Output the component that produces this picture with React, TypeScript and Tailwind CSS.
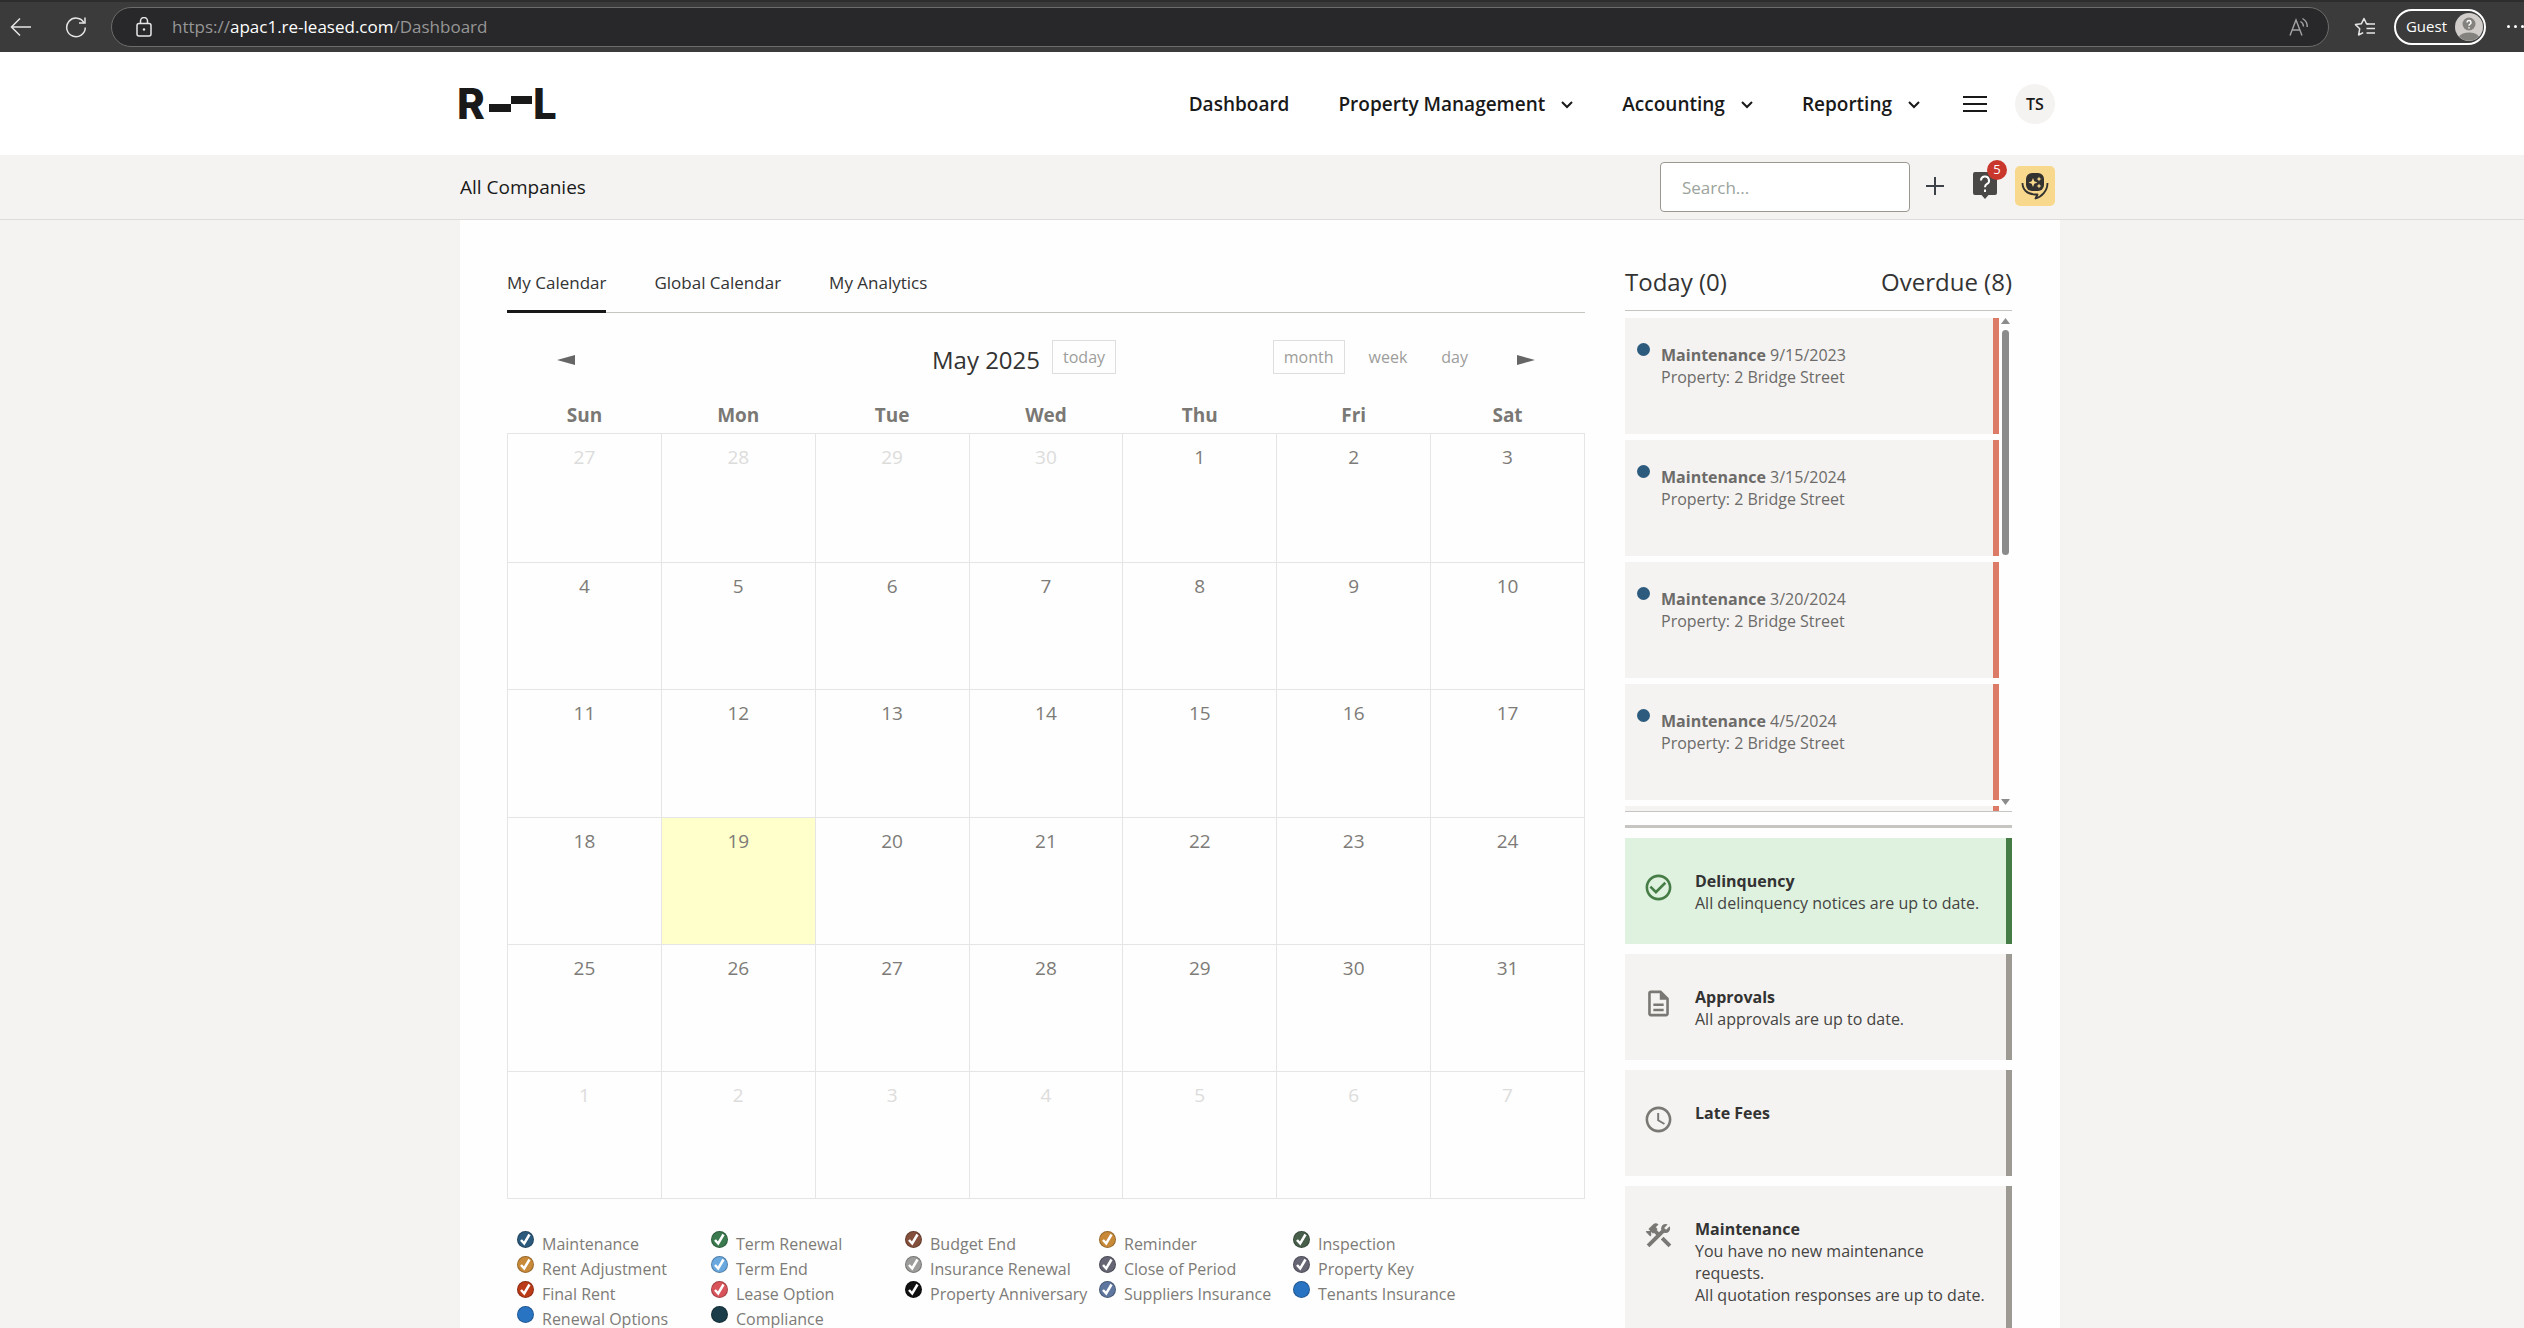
import React, { useState } from "react";
import {
  MdAccessTime,
  MdCheckCircleOutline,
  MdConstruction,
  MdOutlineDescription,
} from "react-icons/md";

const navItems = [
  { label: "Dashboard", hasMenu: false },
  { label: "Property Management", hasMenu: true },
  { label: "Accounting", hasMenu: true },
  { label: "Reporting", hasMenu: true },
];

const tabs = ["My Calendar", "Global Calendar", "My Analytics"];

const weekdays = ["Sun", "Mon", "Tue", "Wed", "Thu", "Fri", "Sat"];

const weeks = [
  [27, 28, 29, 30, 1, 2, 3],
  [4, 5, 6, 7, 8, 9, 10],
  [11, 12, 13, 14, 15, 16, 17],
  [18, 19, 20, 21, 22, 23, 24],
  [25, 26, 27, 28, 29, 30, 31],
  [1, 2, 3, 4, 5, 6, 7],
];

interface LegendItem {
  label: string;
  color: string;
  checked: boolean;
}

const legend: LegendItem[][] = [
  [
    { label: "Maintenance", color: "bg-[#2b5a7d]", checked: true },
    { label: "Rent Adjustment", color: "bg-[#c88a38]", checked: true },
    { label: "Final Rent", color: "bg-[#bb3a17]", checked: true },
    { label: "Renewal Options", color: "bg-[#2874c2]", checked: false },
  ],
  [
    { label: "Term Renewal", color: "bg-[#3b7a4f]", checked: true },
    { label: "Term End", color: "bg-[#6aa9e0]", checked: true },
    { label: "Lease Option", color: "bg-[#d9545a]", checked: true },
    { label: "Compliance", color: "bg-[#1a3d49]", checked: false },
  ],
  [
    { label: "Budget End", color: "bg-[#85503b]", checked: true },
    { label: "Insurance Renewal", color: "bg-[#9d9d9b]", checked: true },
    { label: "Property Anniversary", color: "bg-[#111111]", checked: true },
  ],
  [
    { label: "Reminder", color: "bg-[#c88a38]", checked: true },
    { label: "Close of Period", color: "bg-[#666574]", checked: true },
    { label: "Suppliers Insurance", color: "bg-[#5f779e]", checked: true },
  ],
  [
    { label: "Inspection", color: "bg-[#48604b]", checked: true },
    { label: "Property Key", color: "bg-[#666574]", checked: true },
    { label: "Tenants Insurance", color: "bg-[#2874c2]", checked: false },
  ],
];

const overdue = ["9/15/2023", "3/15/2024", "3/20/2024", "4/5/2024"];

const notices = [
  {
    title: "Delinquency",
    lines: ["All delinquency notices are up to date."],
    icon: MdCheckCircleOutline,
    card: "bg-[#dff2df] border-[#467c46]",
    iconColor: "text-[#467c46]",
  },
  {
    title: "Approvals",
    lines: ["All approvals are up to date."],
    icon: MdOutlineDescription,
    card: "bg-[#f4f3f1] border-[#9d9a94]",
    iconColor: "text-[#7a7874]",
  },
  {
    title: "Late Fees",
    lines: [],
    icon: MdAccessTime,
    card: "bg-[#f4f3f1] border-[#9d9a94]",
    iconColor: "text-[#7a7874]",
  },
  {
    title: "Maintenance",
    lines: [
      "You have no new maintenance requests.",
      "All quotation responses are up to date.",
    ],
    icon: MdConstruction,
    card: "bg-[#f4f3f1] border-[#9d9a94]",
    iconColor: "text-[#7a7874]",
  },
];

const BrowserBar: React.FC = () => (
  <div className="flex h-[52px] shrink-0 items-center border-t-2 border-[#2d2d2d] bg-[#3b3b3b] pb-px text-[#e6e6e6]">
    <button aria-label="Back" className="ml-[10px]">
      <svg width="22" height="22" viewBox="0 0 22 22" fill="none" stroke="currentColor" strokeWidth="1.5">
        <path d="M21 11H1.5M10 2.5L1.5 11l8.5 8.5" />
      </svg>
    </button>
    <button aria-label="Refresh" className="ml-[33px]">
      <svg width="22" height="22" viewBox="0 0 22 22" fill="none" stroke="currentColor" strokeWidth="1.5">
        <path d="M19.2 7A9.3 9.3 0 1 0 20.3 11.5" />
        <path d="M20 1.5V7h-6" />
      </svg>
    </button>
    <div className="ml-6 flex h-10 flex-1 items-center rounded-full border border-[#6c6c6a] bg-[#28282a] pr-[18px] pl-6">
      <svg width="16" height="20" viewBox="0 0 16 20" fill="none" stroke="currentColor" strokeWidth="1.5">
        <rect x="1" y="6.5" width="14" height="12.5" rx="2" />
        <path d="M4.5 6.5V4a3.5 3.5 0 0 1 7 0v2.5" />
        <circle cx="8" cy="12.5" r="1.2" fill="currentColor" stroke="none" />
      </svg>
      <span className="ml-5 flex-1 text-[17px] text-[#969696]">
        https://<span className="text-white">apac1.re-leased.com</span>/Dashboard
      </span>
      <button aria-label="Read aloud" className="text-[#a3a3a3]">
        <svg width="22" height="20" viewBox="0 0 22 20" fill="none" stroke="currentColor" strokeWidth="1.4">
          <path d="M2 18.5L8 3l6 15.5M4.2 13h7.6" />
          <path d="M12.5 4.5a6 6 0 0 1 3 5M14.5 1.5a9.5 9.5 0 0 1 4.8 8.5" />
        </svg>
      </button>
    </div>
    <button aria-label="Favorites" className="ml-[25px]">
      <svg width="22" height="20" viewBox="0 0 22 20" fill="none" stroke="currentColor" strokeWidth="1.5">
        <path d="M14.5 7L12.500 6.8 10 1.5 7.3 6.8 1.5 7.6l4.2 4.2L4.6 18l4.6-2.4" strokeLinejoin="round" />
        <path d="M12.5 7H21M12.5 11.5H21M12.5 16H21" />
      </svg>
    </button>
    <button className="ml-[18px] flex h-9 items-center gap-2 rounded-full border-2 border-white pr-px pl-[10px] text-[15px] text-white">
      Guest
      <svg width="28" height="28" viewBox="0 0 28 28">
        <circle cx="14" cy="14" r="14" fill="#d0cdcb" />
        <path d="M4 23.5a11 7 0 0 1 20 0A14 14 0 0 1 4 23.5z" fill="#84827f" />
        <circle cx="14" cy="11" r="6.5" fill="#84827f" />
        <path d="M12 9.5a2 2 0 1 1 2.8 1.9q-.8.4-.8 1.4M14 14.2v1.3" fill="none" stroke="#fff" strokeWidth="1.5" />
      </svg>
    </button>
    <button aria-label="Settings and more" className="ml-[21px] flex w-[17px] items-center gap-1 overflow-hidden">
      <span className="size-[3px] shrink-0 rounded-full bg-white" />
      <span className="size-[3px] shrink-0 rounded-full bg-white" />
      <span className="size-[3px] shrink-0 rounded-full bg-white" />
    </button>
  </div>
);

const Logo: React.FC = () => (
  <svg
    className="-ml-1"
    width="110"
    height="60"
    viewBox="-4 -15 110 60"
    fill="#191919"
    role="img"
    aria-label="R--L"
  >
    <text x="-3" y="30" fontFamily="Inter, sans-serif" fontWeight="800" fontSize="42">
      R
    </text>
    <rect x="29" y="15" width="22" height="8" />
    <rect x="51" y="7" width="21" height="8" />
    <text x="73" y="30" fontFamily="Inter, sans-serif" fontWeight="800" fontSize="42">
      L
    </text>
  </svg>
);

const Header: React.FC = () => (
  <header className="shrink-0 bg-white pr-1">
    <div className="mx-auto flex h-[103px] max-w-[1600px] items-center justify-between pr-[5px]">
      <a href="#" aria-label="Home">
        <Logo />
      </a>
      <div className="flex items-center">
        <nav className="flex items-center gap-[49px] pt-0.5 text-[19px] font-semibold text-[#191919]">
          {navItems.map((item) => (
            <a key={item.label} href="#" className="flex items-center gap-4">
              {item.label}
              {item.hasMenu && (
                <svg width="12" height="8" viewBox="0 0 12 8" fill="none" stroke="currentColor" strokeWidth="2">
                  <path d="M1 1l5 5 5-5" />
                </svg>
              )}
            </a>
          ))}
        </nav>
        <button aria-label="Menu" className="ml-[43px] flex w-6 flex-col gap-[5px]">
          <span className="h-0.5 bg-[#191919]" />
          <span className="h-0.5 bg-[#191919]" />
          <span className="h-0.5 bg-[#191919]" />
        </button>
        <button className="ml-7 size-10 rounded-full bg-[#f4f3f1] text-base font-semibold text-[#191919]">
          TS
        </button>
      </div>
    </div>
  </header>
);

const CompanyBar: React.FC = () => (
  <div className="shrink-0 border-b border-[#dddcda] pr-1">
    <div className="mx-auto flex h-16 max-w-[1600px] items-center pr-[5px]">
      <span className="flex-1 text-[19px] text-[#191919]">All Companies</span>
      <input
        type="search"
        aria-label="Search"
        placeholder="Search..."
        className="h-[50px] w-[250px] rounded border border-[#9c9890] bg-white px-[21px] text-[17px] placeholder:text-[#9ba39c]"
      />
      <div className="flex items-center pb-[3px]">
        <button aria-label="Add" className="ml-4">
          <svg width="18" height="18" viewBox="0 0 18 18" stroke="#3d4248" strokeWidth="2">
            <path d="M9 0v18M0 9h18" />
          </svg>
        </button>
        <button aria-label="Help" className="relative ml-[29px]">
          <svg width="24" height="27" viewBox="0 0 24 27" fill="none">
            <path d="M2 0h20a2 2 0 0 1 2 2v19a2 2 0 0 1-2 2h-6.5L12 27l-3.5-4H2a2 2 0 0 1-2-2V2a2 2 0 0 1 2-2z" fill="#4a4846" />
            <path d="M8 8.5a4 4 0 1 1 6 3.400q-2 1.2-2 3.3M12 17.5v2.5" stroke="#fff" strokeWidth="2" />
          </svg>
          <span className="absolute -top-3 left-[14px] flex size-5 items-center justify-center rounded-full bg-[#c9362c] text-[13px] text-white">
            5
          </span>
        </button>
        <button aria-label="Assistant" className="ml-[18px] flex size-10 items-center justify-center rounded-[5px] bg-[#f7d88c]">
          <svg width="28" height="28" viewBox="0 0 28 28" fill="none">
            <rect x="5" y="1" width="18" height="18" rx="6" fill="#333231" />
            <path d="M12 6l1.3 3.200L16.5 10.500l-3.200 1.300L12 15l-1.300-3.200L7.500 10.500l3.200-1.300zM18 4.500l.8 1.700 1.700.8-1.700.8-.8 1.700-.8-1.700-1.700-.8 1.700-.8zM18 11.500l.8 1.700 1.700.8-1.700.8-.8 1.700-.8-1.700-1.700-.8 1.700-.8z" fill="#f7d88c" />
            <path d="M1.500 11c0 6.500 4.500 11 12 11.500h3l-2 4c6-1.500 12-7.500 12-15.500" stroke="#333231" strokeWidth="1.8" strokeLinejoin="round" />
          </svg>
        </button>
      </div>
    </div>
  </div>
);

const Calendar: React.FC = () => {
  const [view, setView] = useState("month");

  return (
    <div>
      <div className="mt-[27px] flex h-[34px] items-center text-base text-[#9d9d9b]">
        <div className="flex flex-1 items-center pl-[50px]">
          <button aria-label="Previous month" className="mt-1.5">
            <svg width="18" height="10" viewBox="0 0 18 10" fill="#666">
              <path d="M0 5l18-5v10z" />
            </svg>
          </button>
        </div>
        <div className="flex items-center gap-3 pr-11">
          <h2 className="mt-1.5 text-2xl text-[#333]">May 2025</h2>
          <button className="h-[34px] border border-[#dedede] px-[10px]">today</button>
        </div>
        <div className="flex flex-1 items-center justify-end pr-[50px]">
          {["month", "week", "day"].map((v) => (
            <button
              key={v}
              onClick={() => setView(v)}
              className={
                view === v
                  ? "mr-[7px] h-[34px] border border-[#dedede] px-[10px]"
                  : "h-[34px] px-[17px]"
              }
            >
              {v}
            </button>
          ))}
          <button aria-label="Next month" className="mt-1.5 ml-8">
            <svg width="18" height="10" viewBox="0 0 18 10" fill="#666">
              <path d="M18 5L0 0v10z" />
            </svg>
          </button>
        </div>
      </div>

      <table className="mt-[22px] w-full table-fixed border-collapse">
        <thead>
          <tr className="h-[37px]">
            {weekdays.map((day) => (
              <th key={day} className="p-0 pt-0.5 text-[19px] leading-6 font-bold text-[#7a7874]">
                {day}
              </th>
            ))}
          </tr>
        </thead>
        <tbody>
          {weeks.map((week, row) => (
            <tr key={row} className="h-[127px] first:h-[129px] nth-3:h-[128px]">
              {week.map((date, col) => {
                const otherMonth = (row === 0 && date > 7) || row === 5;
                const isToday = row === 3 && date === 19;
                return (
                  <td
                    key={col}
                    className={`border border-[#e5e5e5] p-0 pt-[9px] text-center align-top text-[19px] leading-7 ${
                      otherMonth ? "text-[#dcdcdb]" : "text-[#7d7b77]"
                    } ${isToday ? "bg-[#ffffcc]" : ""}`}
                  >
                    {date}
                  </td>
                );
              })}
            </tr>
          ))}
        </tbody>
      </table>
    </div>
  );
};

const Legend: React.FC = () => (
  <div className="mt-8 grid w-[980px] grid-cols-5 pl-[10px]">
    {legend.map((column, i) => (
      <div key={i} className="flex flex-col">
        {column.map((item) => (
          <label
            key={item.label}
            className="flex h-[25px] items-start gap-2 text-base leading-[26px] whitespace-nowrap text-[#7d7b77]"
          >
            <span className="relative size-[17px] shrink-0">
              <input
                type="checkbox"
                defaultChecked={item.checked}
                className={`peer block size-[17px] appearance-none rounded-full border border-black/25 ${item.color}`}
              />
              <svg
                className="pointer-events-none absolute inset-0 hidden peer-checked:block"
                width="17"
                height="17"
                viewBox="0 0 17 17"
                fill="none"
                stroke="#fff"
                strokeWidth="2.5"
              >
                <path d="M4 9l3.200 3.500L12.500 3.500" />
              </svg>
            </span>
            {item.label}
          </label>
        ))}
      </div>
    ))}
  </div>
);

const OverdueList: React.FC = () => (
  <div className="flex h-[502px] overflow-hidden border-y border-[#c6c5c2] pt-[7px]">
    <ul className="flex-1 space-y-[6px]">
      {overdue.map((date) => (
        <li
          key={date}
          className="flex h-[116px] items-start gap-[11px] border-r-[6px] border-[#dd7b69] bg-[#f4f3f1] pt-[25px] pl-3 text-base leading-[22px] text-[#6c6b69]"
        >
          <span className="size-[13px] shrink-0 rounded-full bg-[#2c5b7e]" />
          <p className="pt-px">
            <b>Maintenance</b> {date}
            <br />
            Property: 2 Bridge Street
          </p>
        </li>
      ))}
      {/* Top edge of the next entry */}
      <li aria-hidden="true" className="h-[5px] border-r-[6px] border-[#dd7b69] bg-[#f4f3f1]" />
    </ul>
    <div className="flex w-[13px] flex-col items-center pb-[6px]">
      <svg width="9" height="6" viewBox="0 0 9 6" fill="#8b8b8b">
        <path d="M4.5 0L9 6H0z" />
      </svg>
      <div className="mt-[6px] h-[225px] w-[7px] rounded-full bg-[#8b8b8b]" />
      <svg className="mt-auto" width="9" height="6" viewBox="0 0 9 6" fill="#8b8b8b">
        <path d="M4.5 6L0 0h9z" />
      </svg>
    </div>
  </div>
);

const Sidebar: React.FC = () => (
  <aside className="w-[387px] shrink-0">
    <div className="flex h-[90px] items-end justify-between pb-3 text-2xl text-[#333]">
      <h3>Today (0)</h3>
      <h3>Overdue (8)</h3>
    </div>
    <OverdueList />
    <div className="mt-[13px] mb-[10px] h-[3px] bg-[#c6c5c2]" />
    <div className="space-y-[10px]">
      {notices.map(({ title, lines, icon: Icon, card, iconColor }) => (
        <section
          key={title}
          className={`flex min-h-[106px] items-start gap-[21px] border-r-[6px] pt-8 pr-[14px] pb-[30px] pl-[18px] ${card}`}
        >
          <Icon size={31} className={`mt-0.5 shrink-0 ${iconColor}`} />
          <div className="text-base leading-[22px] text-[#454442]">
            <h4 className="font-bold text-[#333]">{title}</h4>
            {lines.map((line) => (
              <p key={line}>{line}</p>
            ))}
          </div>
        </section>
      ))}
    </div>
  </aside>
);

const App: React.FC = () => {
  const [activeTab, setActiveTab] = useState(tabs[0]);

  return (
    <div className="flex h-screen flex-col overflow-hidden bg-[#f4f3f1] font-['Open_Sans',sans-serif]">
      <BrowserBar />
      <Header />
      <CompanyBar />
      <div className="min-h-0 flex-1 pr-1">
        <main className="mx-auto flex min-h-full max-w-[1600px] gap-10 bg-[#fefefe] pr-12 pl-[47px]">
          <div className="min-w-0 flex-1">
            <div className="flex h-[93px] items-end gap-12 border-b border-[#c6c5c2]">
              {tabs.map((tab) => (
                <button
                  key={tab}
                  onClick={() => setActiveTab(tab)}
                  className={`-mb-px border-b-[3px] pb-[15px] text-[17px] leading-6 text-[#333] ${
                    activeTab === tab ? "border-[#191919]" : "border-transparent"
                  }`}
                >
                  {tab}
                </button>
              ))}
            </div>
            <Calendar />
            <Legend />
          </div>
          <Sidebar />
        </main>
      </div>
    </div>
  );
};

export default App;
